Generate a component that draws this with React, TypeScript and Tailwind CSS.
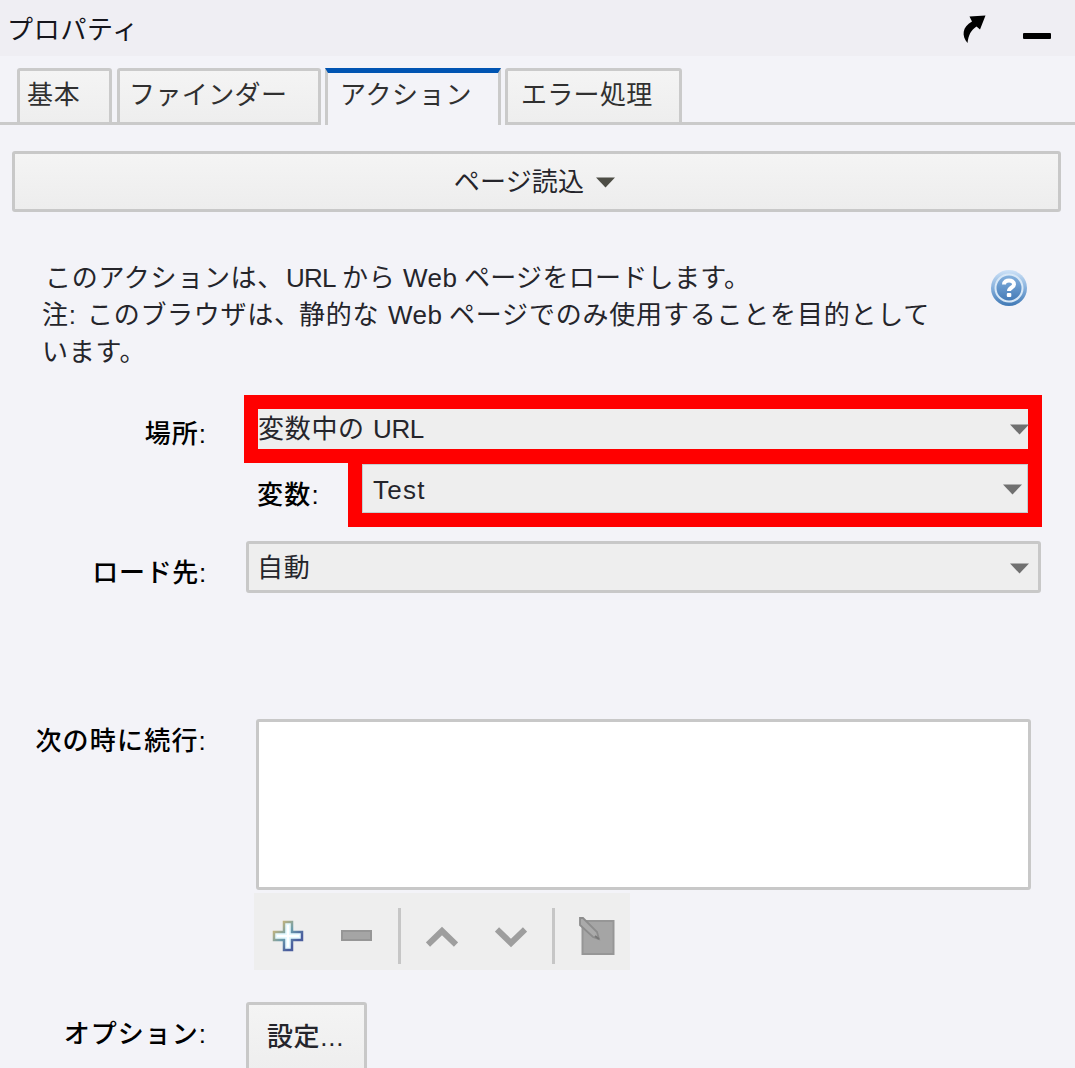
import React from "react";

function Caret({ className = "" }: { className?: string }) {
  return (
    <svg className={`h-[11px] w-[19px] shrink-0 ${className}`} viewBox="0 0 19 11" fill="currentColor">
      <path d="M0 0.5H19L9.5 10.5Z" />
    </svg>
  );
}

function HelpIcon() {
  return (
    <svg className="h-[38px] w-[38px]" viewBox="0 0 38 38">
      <defs>
        <linearGradient id="ring" x1="0" y1="0" x2="0" y2="1">
          <stop offset="0" stopColor="#cfe3f8" />
          <stop offset="0.5" stopColor="#86b0dc" />
          <stop offset="1" stopColor="#3f78b5" />
        </linearGradient>
        <linearGradient id="core" x1="0" y1="0" x2="0" y2="1">
          <stop offset="0" stopColor="#86b2de" />
          <stop offset="1" stopColor="#4279b6" />
        </linearGradient>
      </defs>
      <circle cx="19" cy="19" r="18" fill="url(#ring)" />
      <circle cx="19" cy="19" r="13.5" fill="url(#core)" stroke="#d8e8f7" strokeWidth="2" />
      <path d="M14 15.5C14 10 24 10 24 15.5C24 18.5 19 18.5 19 22" fill="none" stroke="#fff" strokeWidth="4" />
      <rect x="16.8" y="24" width="4.5" height="4" rx="1" fill="#fff" />
    </svg>
  );
}

function Separator() {
  return <div className="h-14 w-[3px] shrink-0 bg-[#c6c6c6]" />;
}

function Label({ children, className = "" }: { children: React.ReactNode; className?: string }) {
  return (
    <div className={`w-[207px] shrink-0 text-right font-medium text-black ${className}`}>{children}</div>
  );
}

export default function App() {
  return (
    <div
      lang="ja"
      className="flex h-[1068px] w-[1075px] flex-col overflow-hidden bg-[#f3f3f8] font-['Liberation_Sans','Noto_Sans_CJK_JP',sans-serif] text-[26px] leading-[37px] tracking-[0.7px] whitespace-nowrap text-[#25252b]"
    >
      <header className="flex h-14 shrink-0 items-start bg-[#efeef3] pl-[7px]">
        <h1 className="mt-[12px] flex-1 text-[#15151c]">プロパティ</h1>
        <svg className="mt-[14px] mr-[36px] h-[30px] w-[26px]" viewBox="0 0 26 30">
          <path d="M8.500 2.500L24.500 1.500L19 15.500L15.500 12.500C10 16 7.500 21 6.500 29C0.500 22 1 13 11 7.500Z" fill="#000" />
        </svg>
        <div className="mt-[33px] mr-6 h-[6px] w-7 rounded-[1px] bg-black" />
      </header>

      <nav className="mt-3 flex h-[57px] shrink-0 text-[#303030]">
        <div className="w-[17px] border-b-[3px] border-[#cacaca]" />
        <div className="w-[95px] rounded-t-[3px] border-[3px] border-[#cacaca] bg-linear-to-b from-[#f4f4f4] to-[#eeeeee] pt-[6px] pl-[7px]">基本</div>
        <div className="w-[5px] border-b-[3px] border-[#cacaca]" />
        <div className="w-[204px] rounded-t-[3px] border-[3px] border-[#cacaca] bg-linear-to-b from-[#f4f4f4] to-[#eeeeee] pt-[6px] pl-[9px] tracking-[0.4px]">ファインダー</div>
        <div className="ml-1 w-[176px] border-x-[3px] border-t-[5px] border-x-[#cacaca] border-t-[#0054b2] pt-1 pl-3">アクション</div>
        <div className="ml-[4px] w-[177px] rounded-t-[3px] border-[3px] border-[#cacaca] bg-linear-to-b from-[#f4f4f4] to-[#eeeeee] pt-[6px] pl-[13px] tracking-[0.3px]">エラー処理</div>
        <div className="flex-1 border-b-[3px] border-[#cacaca]" />
      </nav>

      <button className="mt-[26px] ml-3 flex h-[61px] w-[1049px] shrink-0 items-center justify-center gap-[12px] rounded-[3px] border-[3px] border-[#c8c8c8] bg-linear-to-b from-[#f4f4f4] to-[#ededed] pr-1">
        <span className="pt-[2px] tracking-[0.2px]">ページ読込</span>
        <Caret className="mt-px text-[#4d4d45]" />
      </button>

      <div className="mt-[48px] flex h-[110px] shrink-0">
        <div className="w-[990px] pl-[42px]">
          <div className="flex">
            <span className="w-[244px] pl-[3px]">このアクションは、</span>
            <span className="w-[56px] tracking-[-0.8px]">URL</span>
            <span className="w-[61px]">から</span>
            <span className="w-[61px] tracking-[0.5px]">Web</span>
            <span className="tracking-[0.3px]">ページをロードします。</span>
          </div>
          <div className="flex">
            <span className="w-[45px]">注:</span>
            <span className="w-[212px]">このブラウザは、</span>
            <span className="w-[89px]">静的な</span>
            <span className="w-[61px] tracking-[0.5px]">Web</span>
            <span className="tracking-[0.8px]">ページでのみ使用することを目的として</span>
          </div>
          <div>います。</div>
        </div>
        <div className="mt-[9px]"><HelpIcon /></div>
      </div>

      <div className="mt-[25px] flex h-[68px] shrink-0">
        <Label className="mt-[21px] tracking-[1px]">場所:</Label>
        <div className="ml-[37px] flex h-[68px] w-[798px] items-center border-[14px] border-[#ff0000] bg-[#eeeeee]">
          <span className="flex w-[115px]">変数中の</span>
          <span className="flex-1 tracking-[-0.4px]">URL</span>
          <Caret className="-mr-px text-[#707070]" />
        </div>
      </div>
      <div className="-mt-[13px] flex h-[77px] shrink-0">
        <div className="mt-[27px] ml-[257px] w-[91px] font-medium tracking-[1.2px] text-black">変数:</div>
        <div className="w-[694px] border-[14px] border-[#ff0000]">
          <div className="flex h-full items-center border border-[#c5cfd1] bg-[#eeeeee] pr-[5px] pl-[10px]">
            <span className="flex-1 pt-[3px] tracking-[1.3px]">Test</span>
            <Caret className="mt-[2px] text-[#707070]" />
          </div>
        </div>
      </div>

      <div className="mt-[14px] flex h-[52px] shrink-0">
        <Label className="mt-[14px]">ロード先:</Label>
        <div className="ml-[39px] flex w-[795px] items-center rounded-[3px] border-[3px] border-[#c8c8c8] bg-[#eeeeee] pr-[9px] pl-2">
          <span className="flex-1 pt-[2px]">自動</span>
          <Caret className="mt-[2px] text-[#707070]" />
        </div>
      </div>

      <div className="mt-[126px] flex h-[252px] shrink-0">
        <Label className="mt-[4px] tracking-[1.2px]">次の時に続行:</Label>
        <div className="ml-[47px]">
          <div className="ml-[2px] h-[171px] w-[775px] rounded-[3px] border-[3px] border-[#c8c8c8] bg-white" />
          <div className="mt-[3px] flex h-[77px] w-[376px] items-center bg-[#eeeeee] pt-[8px] pl-[18px]">
            <svg className="h-8 w-8" viewBox="0 0 32 32">
              <defs>
                <linearGradient id="plusEdge" x1="0" y1="0" x2="1" y2="1">
                  <stop offset="0.1" stopColor="#d0b776" />
                  <stop offset="0.45" stopColor="#6b9cac" />
                  <stop offset="0.75" stopColor="#4a5d9d" />
                </linearGradient>
              </defs>
              <path d="M12 2H20V12H30V20H20V30H12V20H2V12H12Z" fill="#e5f9ff" stroke="url(#plusEdge)" strokeWidth="2.5" />
              <path d="M16 5V27M5 16H27" stroke="#fff" strokeWidth="2" />
            </svg>
            <div className="ml-[37px] h-[11px] w-[31px] border-2 border-[#969696] bg-[#a5a5a5]" />
            <div className="ml-[26px] flex"><Separator /></div>
            <svg className="mt-[2px] ml-[25px] h-[22px] w-8" viewBox="0 0 32 22" fill="none" stroke="#9e9e9e" strokeWidth="6">
              <path d="M2 18.500L16 5L30 18.500" />
            </svg>
            <svg className="mt-[2px] ml-[37px] h-[22px] w-8" viewBox="0 0 32 22" fill="none" stroke="#9e9e9e" strokeWidth="6">
              <path d="M2 3.500L16 17L30 3.500" />
            </svg>
            <div className="ml-[25px] flex"><Separator /></div>
            <svg className="ml-[24px] h-[38px] w-9" viewBox="0 0 36 38">
              <rect x="3.500" y="4" width="31" height="33" fill="#a5a5a5" stroke="#969696" strokeWidth="2" />
              <path d="M1 1H4L18 15L20 22L14 20L1 8Z" fill="#aaa" stroke="#8c8c8c" strokeWidth="1.800" />
              <path d="M16 19L20 22" stroke="#777" strokeWidth="2" />
            </svg>
          </div>
        </div>
      </div>

      <div className="mt-[31px] flex h-[80px] shrink-0">
        <Label className="mt-[14px] tracking-[1px]">オプション:</Label>
        <button className="ml-[39px] h-[70px] w-[121px] rounded-[3px] border-[3px] border-[#c8c8c8] bg-linear-to-b from-[#f4f4f4] to-[#eeeeee] pt-px pr-[2px] font-medium">設定...</button>
      </div>
    </div>
  );
}
